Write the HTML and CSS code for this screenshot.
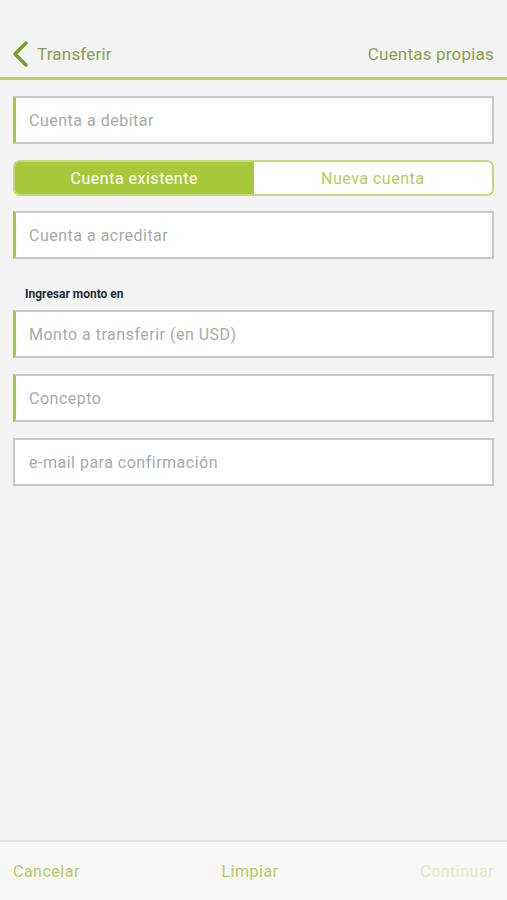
FILE: index.html
```html
<!DOCTYPE html>
<html lang="es">
<head>
    <meta charset="UTF-8">
    <meta name="viewport" content="width=device-width, initial-scale=1.0">
    <title>Transferir</title>
    <link rel="stylesheet" href="styles.css">
</head>
<body>

    <header class="top-bar">
        <a class="back" href="#">
            <svg width="18" height="28" viewBox="0 0 18 28">
                <path d="M15 3 L4 14 L15 25" fill="none" stroke="#7d9a2e" stroke-width="3.4" stroke-linecap="round" stroke-linejoin="round"/>
            </svg>
            <span>Transferir</span>
        </a>
        <span class="section">Cuentas propias</span>
    </header>

    <main class="form">
        <div class="field required">Cuenta a debitar</div>

        <div class="toggle">
            <button class="active">Cuenta existente</button>
            <button>Nueva cuenta</button>
        </div>

        <div class="field required">Cuenta a acreditar</div>

        <p class="label">Ingresar monto en</p>

        <div class="field required">Monto a transferir (en USD)</div>
        <div class="field required">Concepto</div>
        <div class="field">e-mail para confirmación</div>
    </main>

    <footer class="bottom-bar">
        <a href="#">Cancelar</a>
        <a href="#">Limpiar</a>
        <a href="#" class="disabled">Continuar</a>
    </footer>

</body>
</html>
```

FILE: styles.css
```css
html, body {
    height: 100%;
}
body {
    margin: 0;
    background-color: #f4f4f4;
    font-family: Roboto, "DejaVu Sans", sans-serif;
    letter-spacing: 0.5px;
    display: flex;
    flex-direction: column;
}
.top-bar {
    display: flex;
    align-items: center;
    justify-content: space-between;
    height: 46px;
    margin-top: 31px;
    padding: 0 13px 0 11px;
    border-bottom: 3px solid #b9d25a;
    letter-spacing: 0.2px;
}
.back {
    display: flex;
    align-items: center;
    gap: 8px;
    text-decoration: none;
    color: #8c9e4c;
    font-size: 17px;
}
.back svg {
    display: block;
}
.section {
    color: #8c9e4c;
    font-size: 17px;
}
.form {
    flex: 1;
    padding: 16px 13px 0;
    display: flex;
    flex-direction: column;
}
.field {
    height: 44px;
    box-sizing: content-box;
    background: #ffffff;
    border: 2px solid #c8c8c8;
    padding-left: 14px;
    display: flex;
    align-items: center;
    color: #a9a9a9;
    font-size: 16px;
    margin-bottom: 16px;
}
.field.required {
    border-left: 3px solid #a6c83a;
    padding-left: 13px;
}
.toggle {
    display: flex;
    height: 32px;
    border: 2px solid #c3d97a;
    border-radius: 7px;
    overflow: hidden;
    margin: 0 0 15px;
}
.toggle button {
    flex: 1;
    border: none;
    margin: 0;
    padding: 0;
    font-family: inherit;
    letter-spacing: inherit;
    font-size: 16px;
    background: #ffffff;
    color: #b3cc5c;
}
.toggle button.active {
    background: #a6c83a;
    color: #ffffff;
}
.label {
    margin: 12px 0 9px 12px;
    font-size: 12px;
    font-weight: bold;
    letter-spacing: 0;
    color: #1f2b38;
}
.bottom-bar {
    height: 58px;
    border-top: 2px solid #e2e2e2;
    background: #f7f7f7;
    display: flex;
    align-items: center;
    justify-content: space-between;
    padding: 0 13px;
}
.bottom-bar a {
    color: #b2cb5e;
    text-decoration: none;
    font-size: 16px;
}
.bottom-bar a.disabled {
    color: #e2ebc4;
}
```
